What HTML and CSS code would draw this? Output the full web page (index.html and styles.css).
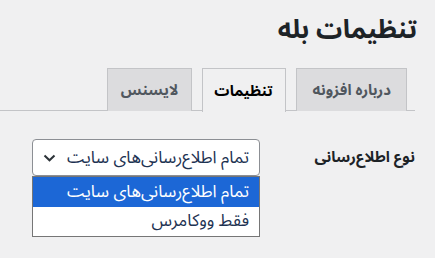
FILE: index.html
```
<!DOCTYPE html>
<html dir="rtl" lang="fa">
  <head>
    <title>تنظیمات بله</title>
    <meta name="viewport" content="width=device-width, initial-scale=1" />
    <link rel="stylesheet" href="styles.css">
  </head>

  <body>
    <div class="wrap">
      <h1>تنظیمات بله</h1>
      <nav class="nav-tab-wrapper">
        <a class="nav-tab nav-tab-about" href="#">درباره افزونه</a>
        <a class="nav-tab nav-tab-active" href="#">تنظیمات</a>
        <a class="nav-tab" href="#">لایسنس</a>
      </nav>
      <div class="form-row">
        <div class="form-label">نوع اطلاع‌رسانی</div>
        <div class="form-field">
          <div class="select">
            <span class="select-value">تمام اطلاع‌رسانی‌های سایت</span>
            <svg class="chevron" width="13" height="8" viewBox="0 0 13 8">
              <path d="M1.5 1.5 L6.5 6.3 L11.5 1.5" fill="none" stroke="#2c3338" stroke-width="2" />
            </svg>
          </div>
          <ul class="options">
            <li class="option selected">تمام اطلاع‌رسانی‌های سایت</li>
            <li class="option">فقط ووکامرس</li>
          </ul>
        </div>
      </div>
    </div>
  </body>
</html>
```

FILE: styles.css
```
*,
*:before,
*:after {
  box-sizing: border-box;
}

body {
  margin: 0;
  background: #f0f0f1;
  color: #1d2327;
  font-family: "Noto Sans Arabic", "DejaVu Sans", sans-serif;
  direction: rtl;
  height: 258px;
  overflow: hidden;
}

.wrap {
  padding: 10px 20px 0 0;
}

h1 {
  margin: 0 -2px 0 0;
  font-size: 26px;
  font-weight: bold;
  line-height: 40px;
  color: #1d2327;
  white-space: nowrap;
}

.nav-tab-wrapper {
  display: flex;
  gap: 10px;
  margin-top: 17px;
  padding-right: 8px;
  border-bottom: 1px solid #c3c4c7;
  height: 44px;
}

.nav-tab {
  display: flex;
  align-items: center;
  justify-content: center;
  height: 43px;
  margin-top: 1px;
  padding: 0 13px;
  background: #dcdcde;
  border: 1px solid #c3c4c7;
  border-bottom: none;
  color: #50575e;
  font-size: 15px;
  font-weight: bold;
  line-height: 24px;
  text-decoration: none;
  white-space: nowrap;
}

.nav-tab-about {
  padding: 0 15px 0 16px;
}

.nav-tab-active {
  background: #f0f0f1;
  color: #000;
  height: 44px;
  padding: 0 12px 0 11px;
}

.form-row {
  display: flex;
  margin-top: 28px;
}

.form-label {
  width: 155px;
  font-size: 15px;
  font-weight: bold;
  line-height: 37px;
  color: #1d2327;
  white-space: nowrap;
}

.form-field {
  position: relative;
  width: 228px;
}

.select {
  display: flex;
  align-items: center;
  justify-content: space-between;
  height: 37px;
  padding: 0 10px 0 10px;
  background: #fff;
  border: 1px solid #8c8f94;
  border-radius: 4px;
  color: #1d3252;
  font-size: 17px;
  line-height: 30px;
  white-space: nowrap;
}

.chevron {
  flex-shrink: 0;
}

.options {
  position: absolute;
  top: 37px;
  right: 0;
  left: 0;
  margin: 0;
  padding: 0;
  list-style: none;
  background: #fff;
  border: 1px solid #767676;
}

.option {
  height: 29px;
  line-height: 29px;
  padding: 0 10px;
  font-size: 17px;
  color: #1d3252;
  white-space: nowrap;
}

.option.selected {
  background: #1c67d6;
  color: #fff;
  height: 30px;
  line-height: 30px;
}
```
